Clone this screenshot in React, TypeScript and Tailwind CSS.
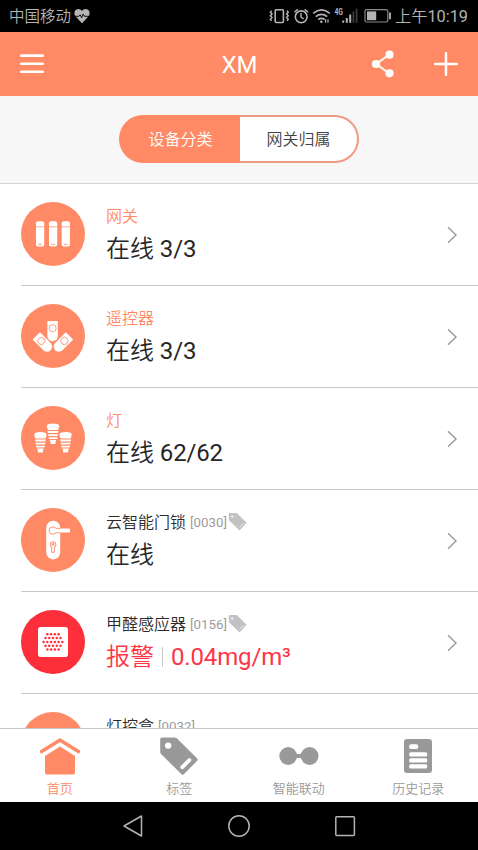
import React, { useState } from 'react';

interface Device {
  id: number;
  icon: React.ReactNode;
  name: string;
  code?: string;
  tagged?: boolean;
  status?: string;
  reading?: string;
  alarm?: boolean;
}

interface TabItem {
  label: string;
  icon: React.ReactNode;
}

const ORANGE = '#ff8a65';

const GatewayIcon = () => (
  <>
    {[15, 28, 40.7].map((x) => (
      <g key={x}>
        <rect x={x} y="19.3" width="8.2" height="25.2" rx="2" fill="#fff" />
        <path d={`M${x} 24.8h8.2`} stroke={ORANGE} strokeWidth="0.7" />
        <path d={`M${x + 2} 42.3h4.2`} stroke={ORANGE} strokeWidth="0.8" />
      </g>
    ))}
  </>
);

const RemoteBody = () => (
  <>
    <path d="M-5.2 -7.2h10.4V8a5.2 5 0 0 1-10.4 0z" fill="#fff" />
    <circle r="3.6" fill="none" stroke={ORANGE} strokeWidth="0.8" />
  </>
);

const RemoteIcon = () => (
  <>
    <g transform="translate(31.6 24.2)"><RemoteBody /></g>
    <g transform="translate(20.4 37) rotate(-45)"><RemoteBody /></g>
    <g transform="translate(43.4 37) rotate(45)"><RemoteBody /></g>
  </>
);

const LampIcon = () => (
  <>
    {[[32, 17.7], [19.4, 26.2], [44.6, 26.2]].map(([x, y]) => (
      <g key={x} transform={`translate(${x} ${y})`} fill="#fff">
        <path d="M-4.2 0.3Q0 -0.6 4.2 0.3Q6.2 0.8 6.1 2.6L5.5 5.2Q5.2 6.2 4.2 6.2H-4.2Q-5.2 6.2 -5.5 5.2L-6.1 2.6Q-6.2 0.8 -4.2 0.3z" />
        <path d="M-5.4 7.4H5.4L5.1 9.3H-5.1zM-5 10.5H5L4.7 12.3H-4.7zM-4.6 13.5H4.6L4 15.3H-4zM-3.4 16.4H3.4L2.5 18.4V20.2H-2.5V18.4z" />
      </g>
    ))}
  </>
);

const LockIcon = () => (
  <>
    <rect x="25.2" y="12.8" width="14" height="38.6" rx="7" fill="#fff" />
    <circle cx="31.8" cy="22.6" r="3.7" fill="none" stroke={ORANGE} strokeWidth="0.9" />
    <path d="M33 20.4H48.2Q49 20.4 49 21.2V23.8Q49 24.6 48.2 24.6H33z" fill="#fff" />
    <path d="M34.8 20.4H39.2M34.8 24.6H39.2" stroke={ORANGE} strokeWidth="0.8" />
    <circle cx="32" cy="36.6" r="2.9" fill="none" stroke={ORANGE} strokeWidth="1" />
    <circle cx="32" cy="36.3" r="1.3" fill={ORANGE} />
    <path d="M30.6 39V44.3H33.4V39" fill="#fff" stroke={ORANGE} strokeWidth="0.9" />
  </>
);

const SensorIcon = () => (
  <>
    <rect x="17" y="17" width="30" height="30" rx="2.8" fill="#fff" />
    {[4, 5, 6, 5, 4].map((count, row) =>
      Array.from({ length: count }, (_, i) => (
        <circle
          key={`${row}-${i}`}
          cx={32 + (i - (count - 1) / 2) * 3.75}
          cy={24.3 + row * 3.8}
          r="1.25"
          fill="#fd2f3b"
        />
      ))
    )}
  </>
);

const SmallTagIcon = () => (
  <svg className="mb-[3px] ml-px h-5 w-5 shrink-0" viewBox="0 0 20 20">
    <path d="M0.8 2Q0.8 1 1.8 1H8.8L18.6 10.8L11.6 18.6L0.8 8z" fill="#c2c2c2" />
    <circle cx="4.2" cy="4.6" r="1.1" fill="#fff" />
    <path d="M11.6 15.4L15.5 11.4" stroke="#f4f4f4" strokeWidth="0.9" />
  </svg>
);

const devices: Device[] = [
  { id: 1, icon: <GatewayIcon />, name: '网关', status: '在线 3/3' },
  { id: 2, icon: <RemoteIcon />, name: '遥控器', status: '在线 3/3' },
  { id: 3, icon: <LampIcon />, name: '灯', status: '在线 62/62' },
  { id: 4, icon: <LockIcon />, name: '云智能门锁', code: '[0030]', tagged: true, status: '在线' },
  { id: 5, icon: <SensorIcon />, name: '甲醛感应器', code: '[0156]', tagged: true, status: '报警', reading: '0.04mg/m³', alarm: true },
  { id: 6, icon: null, name: '灯控盒', code: '[0032]' },
];

const tabs: TabItem[] = [
  {
    label: '首页',
    icon: (
      <svg className="h-10 w-11" viewBox="0 0 44 40" fill="currentColor">
        <path d="M3.6 15.6L22 4L40.4 15.6" fill="none" stroke="currentColor" strokeWidth="3.6" strokeLinecap="round" strokeLinejoin="round" />
        <path d="M22 10.4L37 20V36Q37 38.6 34.5 38.6H9.5Q7 38.6 7 36V20z" />
      </svg>
    ),
  },
  {
    label: '标签',
    icon: (
      <svg className="h-10 w-11" viewBox="0 0 44 40">
        <path d="M5 1.5H17.6Q18.9 1.5 19.8 2.3L40.2 22.6Q41.2 23.8 40.2 24.8L26.8 38.2Q25.6 39.2 24.5 38.2L4 18Q3.2 17.2 3.2 16V3.3Q3.2 1.5 5 1.5z" fill="currentColor" />
        <circle cx="11.2" cy="9.6" r="3.2" fill="#fff" />
        <path d="M25.3 31.2L32.4 24.1" stroke="#fff" strokeWidth="3.8" strokeLinecap="round" />
      </svg>
    ),
  },
  {
    label: '智能联动',
    icon: (
      <svg className="h-10 w-11" viewBox="0 0 44 40" fill="currentColor">
        <circle cx="11.2" cy="20" r="8.9" />
        <circle cx="32.6" cy="20" r="8.9" />
        <rect x="18" y="18" width="8" height="4" />
      </svg>
    ),
  },
  {
    label: '历史记录',
    icon: (
      <svg className="h-10 w-11" viewBox="0 0 44 40">
        <rect x="8" y="3" width="28" height="34" rx="3.2" fill="currentColor" />
        <g fill="#fff">
          <rect x="13.2" y="8.2" width="9" height="4.8" rx="1.8" />
          <rect x="13.2" y="16.2" width="18" height="4.4" rx="1.5" />
          <rect x="13.2" y="22.2" width="18" height="4.4" rx="1.5" />
          <rect x="13.2" y="28.2" width="18" height="4.4" rx="1.5" />
        </g>
      </svg>
    ),
  },
];

function StatusBar() {
  return (
    <div className="flex h-8 shrink-0 items-center justify-between bg-black pl-[9px] pr-[10px] text-[#b4b4b4]">
      <div className="flex items-center">
        <span className="pt-0.5 text-[15.5px] leading-8 font-[350]">中国移动</span>
        <svg className="ml-[3px] h-4 w-4" viewBox="0 0 16 16">
          <path d="M8 15.2L1.6 8.6C-0.6 6 0.2 1.2 4.2 1.1C6 1.1 7.2 2 8 3.1C8.8 2 10 1.1 11.8 1.1C15.8 1.2 16.6 6 14.4 8.6z" fill="currentColor" />
          <path d="M0.5 8.3H4.8L6.2 6.8L7.6 9.8L9.2 6L10.4 8.3H15.5" fill="none" stroke="#000" strokeWidth="0.9" />
        </svg>
      </div>
      <div className="flex items-center">
        <svg className="h-8 w-[122px]" viewBox="270 0 122 32" fill="none" stroke="currentColor">
          {/* vibrate */}
          <rect x="276.2" y="9.7" width="8.2" height="12.8" rx="1" strokeWidth="1.6" />
          <path d="M272.6 10.6l-1.2 1.5 1.6 1.8-1.6 1.8 1.6 1.8-1.6 1.8 1.2 1.6M288 10.6l1.2 1.5-1.6 1.8 1.6 1.8-1.6 1.8 1.6 1.8-1.2 1.6" strokeWidth="1.5" />
          {/* alarm */}
          <circle cx="302.2" cy="16.8" r="5.9" strokeWidth="1.6" />
          <path d="M302 13v4l2.6 1.8M295.4 12.2l3.4-2.8M309 12.2l-3.4-2.8" strokeWidth="1.4" />
          {/* wifi */}
          <path d="M314.2 13.3q8.3-6.8 16.6 0M316.8 16.6q5.7-4.5 11.4 0M319.3 19.6q3.2-2.4 6.4 0" strokeWidth="1.7" />
          <circle cx="322.3" cy="21.8" r="1.2" fill="currentColor" stroke="none" />
          <path d="M326.6 19.2v3.6M329 19.2v3.6" strokeWidth="1.2" />
          <text x="335.4" y="15" fontSize="9" fontWeight="700" fill="currentColor" stroke="none" textLength="8.5" lengthAdjust="spacingAndGlyphs">4G</text>
          {/* signal */}
          <path d="M344.2 20.5v2.2M347.8 18v4.7M351.2 14.4v8.3" strokeWidth="2" />
          <path d="M354.4 11.4v11.3M357.6 8.8v13.9" strokeWidth="1.8" stroke="#3a3a3a" />
          {/* battery */}
          <rect x="366" y="9.6" width="22.8" height="12.4" rx="1.5" strokeWidth="1.2" stroke="#8a8a8a" />
          <rect x="368" y="11.4" width="9.2" height="8.8" fill="currentColor" stroke="none" />
          <path d="M391 12.6v6.6" strokeWidth="1.8" />
        </svg>
        <span className="ml-1 whitespace-nowrap pt-0.5 text-[16.3px] leading-8 font-[350]">上午<span className="font-normal">10:19</span></span>
      </div>
    </div>
  );
}

function DeviceRow({ device }: { device: Device }) {
  return (
    <div className="ml-[21px] flex h-[102px] shrink-0 items-center border-b border-[#c8c8c8]">
      <svg className={`mb-px h-16 w-16 shrink-0 rounded-full ${device.alarm ? 'bg-[#fd2f3b]' : 'bg-[#ff8a65]'}`} viewBox="0 0 64 64">
        {device.icon}
      </svg>
      <div className="ml-[21px] mt-[3px] flex-1">
        <div className="flex h-6 items-center">
          <span className={`text-base leading-6 font-[350] ${device.code ? 'text-[#2b2b2b]' : 'text-[#ff8a65]'}`}>{device.name}</span>
          {device.code && <span className="ml-1 text-[13.3px] leading-6 text-[#9c9c9c]">{device.code}</span>}
          {device.tagged && <SmallTagIcon />}
        </div>
        <div className={`mt-0.5 flex h-9 items-center text-2xl leading-9 font-[350] ${device.alarm ? 'text-[#fd3546]' : 'text-[#262626]'}`}>
          {device.status && <DeviceStatus text={device.status} />}
          {device.reading && (
            <>
              <span className="mx-2 h-5 w-px bg-[#c8c8c8]" />
              <span className="font-normal tracking-[-0.006em]">{device.reading}</span>
            </>
          )}
        </div>
      </div>
      <svg className="mr-5 h-[18px] w-3" viewBox="0 0 12 18" fill="none" stroke="#999" strokeWidth="1.4">
        <path d="M2 1.2L10 9L2 16.8" />
      </svg>
    </div>
  );
}

function DeviceStatus({ text }: { text: string }) {
  const [state, count] = text.split(' ');
  return (
    <span>
      {state}
      {count && <span className="font-normal tracking-[-0.006em]"> {count}</span>}
    </span>
  );
}

export default function App() {
  const [category, setCategory] = useState(0);
  const [activeTab, setActiveTab] = useState(0);

  return (
    <div className="flex h-[850px] w-[478px] flex-col overflow-hidden bg-white font-[Roboto,'Noto_Sans_CJK_SC',sans-serif]">
      <StatusBar />

      {/* Header */}
      <header className="grid h-16 shrink-0 grid-cols-3 items-center bg-[#ff8a65] text-white">
        <svg className="ml-5 h-6 w-6" viewBox="0 0 24 24" stroke="currentColor" strokeWidth="2.6" strokeLinecap="round">
          <path d="M1.2 3.6H22.8M1.2 11.7H22.8M1.2 19.7H22.8" />
        </svg>
        <h1 className="pl-px pt-0.5 text-center text-2xl">XM</h1>
        <div className="flex items-center justify-end gap-[39px] pr-5">
          <svg className="h-7 w-6" viewBox="0 0 24 28" fill="currentColor">
            <path d="M18.5 4.5L5 14L18.5 23.5" fill="none" stroke="currentColor" strokeWidth="2" />
            <circle cx="18.5" cy="4.7" r="4.1" />
            <circle cx="5" cy="14" r="4.1" />
            <circle cx="18.5" cy="23.3" r="4.1" />
          </svg>
          <svg className="h-6 w-6" viewBox="0 0 24 24" stroke="currentColor" strokeWidth="2.5" strokeLinecap="round">
            <path d="M1.2 12H22.8M12 1.2V22.8" />
          </svg>
        </div>
      </header>

      {/* Category switch */}
      <div className="flex h-22 shrink-0 items-center justify-center border-b border-[#d4d4d4] bg-[#f7f7f7]">
        <div className="mb-[2px] grid h-12 w-60 grid-cols-[121px_119px]">
          {['设备分类', '网关归属'].map((label, idx) => (
            <button
              key={label}
              onClick={() => setCategory(idx)}
              className={`border-2 pt-0.5 text-base font-[350] ${idx === 0 ? 'rounded-l-full border-r-0' : 'rounded-r-full border-l-0'} ${
                category === idx ? 'border-[#ff8a65] bg-[#ff8a65] text-white' : 'border-[#f09a85] bg-white text-[#444]'
              }`}
            >
              {label}
            </button>
          ))}
        </div>
      </div>

      {/* Device list */}
      <main className="flex min-h-0 flex-1 flex-col overflow-hidden">
        {devices.map((device) => (
          <DeviceRow key={device.id} device={device} />
        ))}
      </main>

      {/* Bottom tabs */}
      <nav className="grid h-[74px] shrink-0 grid-cols-4 border-t border-[#c8c8c8] bg-white">
        {tabs.map((tab, idx) => (
          <button
            key={tab.label}
            onClick={() => setActiveTab(idx)}
            className={`flex flex-col items-center pt-[7px] ${activeTab === idx ? 'text-[#ff8a65]' : 'text-[#999]'}`}
          >
            {tab.icon}
            <span className="mt-[3px] text-[13px] leading-5 font-[350]">{tab.label}</span>
          </button>
        ))}
      </nav>

      {/* System navigation */}
      <div className="flex h-12 shrink-0 items-center justify-center gap-[82px] bg-black text-[#b4b4b4]">
        <svg className="h-6 w-6" viewBox="0 0 24 24" fill="none" stroke="currentColor" strokeWidth="1.5" strokeLinejoin="round">
          <path d="M20.5 2V22L3 12z" />
        </svg>
        <svg className="h-6 w-6" viewBox="0 0 24 24" fill="none" stroke="currentColor" strokeWidth="1.5">
          <circle cx="12" cy="12" r="10.2" />
        </svg>
        <svg className="h-6 w-6" viewBox="0 0 24 24" fill="none" stroke="currentColor" strokeWidth="1.5">
          <rect x="2.8" y="2.8" width="18.6" height="18.6" rx="0.8" />
        </svg>
      </div>
    </div>
  );
}
